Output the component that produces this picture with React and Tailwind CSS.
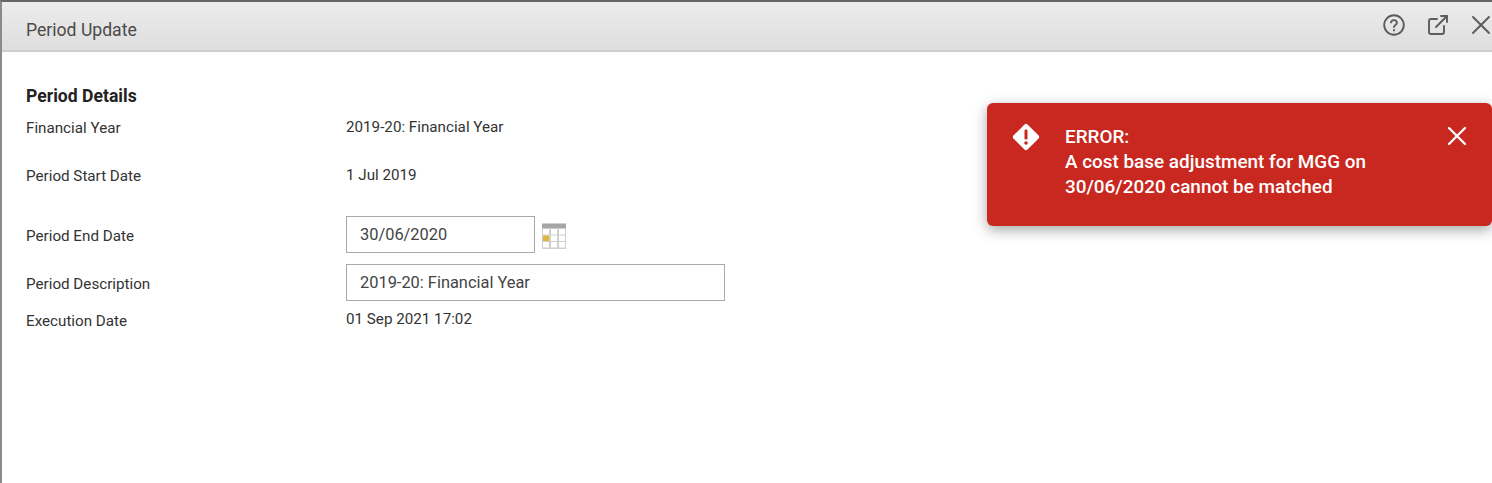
import { X, ExternalLink } from 'lucide-react';

function CalendarIcon() {
  return (
    <svg width="24" height="26" viewBox="0 0 24 26" className="ml-[7px] mt-[2px]">
      <rect x="0" y="0" width="24" height="26" fill="#cfcfcf" />
      <rect x="0" y="1" width="24" height="4" fill="#a8a6a4" />
      {[0, 1, 2].map(r =>
        [0, 1, 2].map(c => (
          <rect key={`${r}-${c}`} x={1 + c * 8} y={6 + r * 6.5} width="6" height="5.5" fill="#fff" />
        ))
      )}
      <rect x="1" y="12.500" width="6" height="5.5" fill="#e0b63a" />
    </svg>
  );
}

function Row({ label, className, children }) {
  return (
    <div className={`flex items-center ${className || ''}`}>
      <div className="mt-[2px] w-[320px] text-[15.2px] leading-[20px] text-[#333]">{label}</div>
      {children}
    </div>
  );
}

export default function App() {
  return (
    <div className="relative h-[483px] w-[1492px] overflow-hidden bg-white font-['Roboto',sans-serif] border-t-2 border-l-2 border-t-[#666] border-l-[#8a8a8a]">
      {/* Header */}
      <div className="flex h-[50px] items-center justify-between border-b-2 border-[#cfcfcf] bg-gradient-to-b from-[#ececec] to-[#dedede] pl-[24px]">
        <div className="mt-[8px] text-[17.6px] text-[#4a4a4a]">Period Update</div>
        <div className="mb-[2px] flex items-center text-[#5c5c5c]">
          <svg width="24" height="24" viewBox="0 0 24 24" fill="none" stroke="currentColor" strokeWidth="1.9" strokeLinecap="round">
            <circle cx="12" cy="12" r="9.8" />
            <path d="M9 9.4a3 3 0 0 1 5.9.6c0 1.8-2.9 2.2-2.9 4" />
            <path d="M12 17.2v.1" strokeWidth="2.2" />
          </svg>
          <ExternalLink size={24} strokeWidth={1.9} className="ml-[20px]" />
          <X size={32} strokeWidth={1.4} className="ml-[15px] mr-[-5px]" />
        </div>
      </div>

      {/* Details */}
      <div className="pl-[24px] pt-[33px]">
        <div className="text-[17.6px] font-bold leading-[22px] text-[#222]">Period Details</div>
        <Row label="Financial Year" className="mt-[9px]">
          <span className="text-[15.2px] leading-[20px] text-[#333]">2019-20: Financial Year</span>
        </Row>
        <Row label="Period Start Date" className="mt-[26px]">
          <span className="text-[15.2px] leading-[20px] text-[#333]">1 Jul 2019</span>
        </Row>
        <Row label="Period End Date" className="mt-[30px]">
          <input
            readOnly
            value="30/06/2020"
            className="h-[37px] w-[189px] border border-[#a9a9a9] px-[13px] text-[16.4px] text-[#444] outline-none"
          />
          <CalendarIcon />
        </Row>
        <Row label="Period Description" className="mt-[11px]">
          <input
            readOnly
            value="2019-20: Financial Year"
            className="h-[37px] w-[379px] border border-[#a9a9a9] px-[13px] text-[16.4px] text-[#444] outline-none"
          />
        </Row>
        <Row label="Execution Date" className="mt-[8px]">
          <span className="mb-[2px] text-[15.2px] leading-[20px] text-[#333]">01 Sep 2021 17:02</span>
        </Row>
      </div>

      {/* Error toast */}
      <div className="absolute left-[985px] top-[101px] flex h-[123px] w-[505px] rounded-[6px] bg-[#c8281f] text-white shadow-[0_4px_14px_rgba(0,0,0,0.35)]">
        <svg width="28" height="28" viewBox="0 0 28 28" className="ml-[25px] mt-[20px] shrink-0">
          <path d="M14 .8c.6 0 1.100.2 1.500.6l11.100 11.100c.8.8.8 2.200 0 3L15.500 26.600c-.8.8-2.200.8-3 0L1.400 15.500c-.8-.8-.8-2.200 0-3L12.500 1.400c.4-.4.900-.6 1.500-.6z" fill="#fff" />
          <rect x="12.500" y="6.500" width="3" height="10" rx="1.200" fill="#c8281f" />
          <circle cx="14" cy="20" r="1.800" fill="#c8281f" />
        </svg>
        <div className="ml-[25px] mt-[21px] w-[361px] text-[18.9px] font-medium leading-[25px]">
          <div>ERROR:</div>
          <div>A cost base adjustment for MGG on</div>
          <div>30/06/2020 cannot be matched</div>
        </div>
        <X size={32} strokeWidth={1.7} className="ml-[15px] mt-[17px] shrink-0" />
      </div>
    </div>
  );
}
